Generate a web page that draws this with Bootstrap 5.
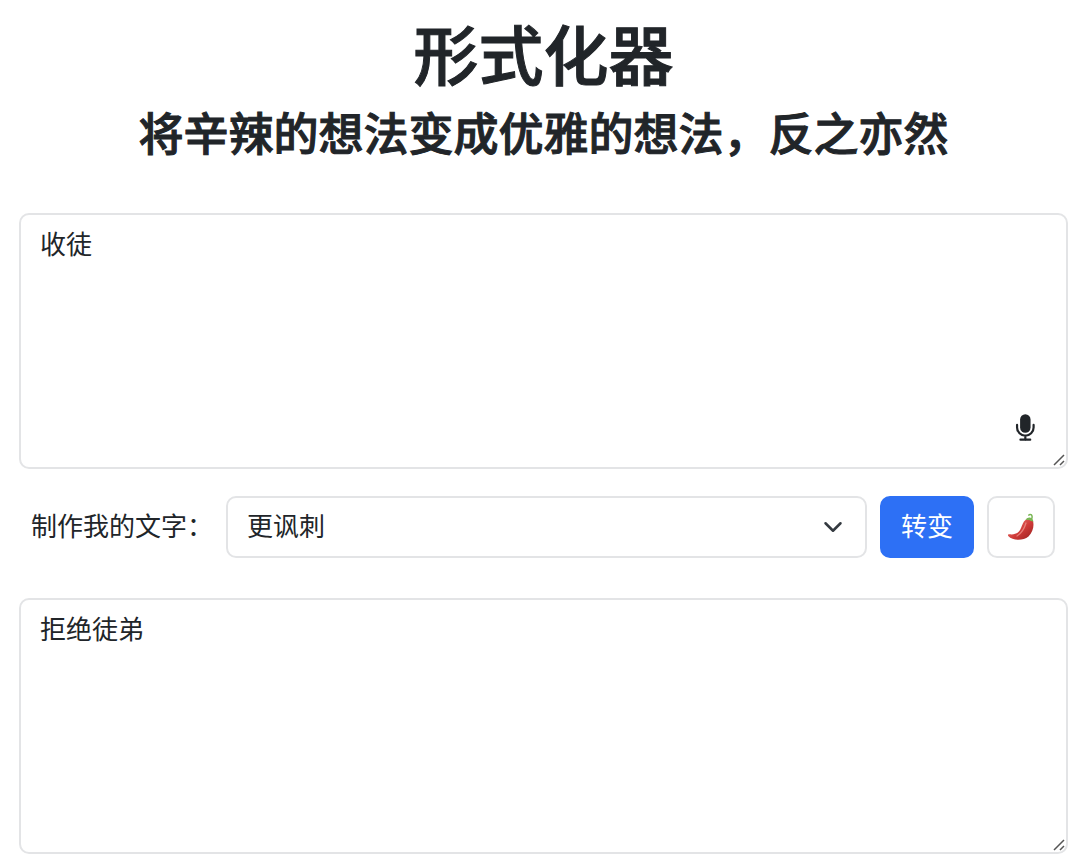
<!DOCTYPE html>
<html lang="zh-CN">
<head>
<meta charset="utf-8">
<meta name="viewport" content="width=device-width, initial-scale=1">
<title>形式化器</title>
<link href="https://cdn.jsdelivr.net/npm/bootstrap@5.3.0/dist/css/bootstrap.min.css" rel="stylesheet">
<style>
body{font-family:"Liberation Sans","Noto Sans CJK SC",sans-serif;font-size:26px;line-height:39px;color:#212529}
.page{padding:19px 12px 4px 19px}
.page-title,.page-subtitle{font-weight:500;-webkit-text-stroke:1px currentColor}
.page-title{font-size:65px;line-height:78px;margin-bottom:11px}
.page-subtitle{font-size:45px;line-height:56px;margin-bottom:49px}
.text-area.form-control{height:256px;padding:11px 19px;font-size:26px;line-height:39px;border:2px solid #e3e4e6;border-radius:10px;resize:vertical}
.text-area::-webkit-resizer{background:url("data:image/svg+xml,%3Csvg xmlns='http://www.w3.org/2000/svg' viewBox='0 0 15 15'%3E%3Cpath d='M3 13 13 3M9 13l4-4' stroke='%23555' stroke-width='1.500' fill='none'/%3E%3C/svg%3E") center/15px 15px no-repeat}
.mic{right:29px;bottom:28px;line-height:0;color:#212529}
.toolbar{padding:0 13px 0 12px;margin:27px 0 40px;gap:13px}
.tone.form-select{height:62px;font-size:26px;line-height:39px;padding:0 60px 0 19px;border:2px solid #e3e4e6;border-radius:10px;background-size:20px 20px;background-position:right 22px center}
.tool-btn{height:62px;font-size:26px;line-height:39px;border-radius:10px;padding:0 19px;border-width:2px}
.go{background:#2d70f5;border-color:#2d70f5}
.spice{width:68px;border-color:#e3e4e6;padding:0}
</style>
</head>
<body>
<main class="page">
<h1 class="page-title text-center">形式化器</h1>
<h2 class="page-subtitle text-center">将辛辣的想法变成优雅的想法，反之亦然</h2>
<div class="position-relative">
<textarea class="form-control text-area" aria-label="原文">收徒</textarea>
<button type="button" class="btn border-0 p-0 mic position-absolute" aria-label="语音输入">
<svg width="27" height="27" viewBox="0 0 16 16" fill="currentColor"><path d="M4.800 3.200a3.100 3.100 0 0 1 6.200 0v4.800a3.100 3.100 0 0 1-6.200 0z"/><path d="M3 6.500v1.500a4.900 4.900 0 0 0 9.800 0V6.500M7.900 12.800v2.500M5 15.200h5.800" fill="none" stroke="currentColor" stroke-width="1.300" stroke-linecap="round"/></svg>
</button>
</div>
<div class="toolbar d-flex align-items-center">
<label for="tone" class="text-nowrap">制作我的文字：</label>
<select id="tone" class="form-select tone flex-fill"><option>更讽刺</option></select>
<button type="button" class="btn btn-primary tool-btn go text-nowrap">转变</button>
<button type="button" class="btn tool-btn spice flex-shrink-0 d-flex align-items-center justify-content-center" aria-label="辣度">
<svg width="28" height="28" viewBox="0 0 28 28">
<defs><linearGradient id="skin" x1="0" y1="0" x2="1" y2="1"><stop offset="0.300" stop-color="#e0605a"/><stop offset="0.550" stop-color="#cf3a38"/><stop offset="1" stop-color="#97201f"/></linearGradient></defs>
<path d="M18.500 7C20.500 4.500 25 5 26 8 27.300 13 26 19 21.500 23.500 16 28 6 28 1.200 23 0.600 22 1.300 21 2.400 21.300 8 22 12 20 14 15 15.500 11.500 16 9 18.500 7z" fill="url(#skin)"/>
<path d="M19 10C17.500 15 15 20 10 23" fill="none" stroke="#f19a92" stroke-width="1.300" stroke-linecap="round" opacity="0.700"/>
<path d="M18.500 6.800C20 4.800 22 4.300 23.500 4.800 25.300 5.300 26.300 7 26.300 9 24.800 7.500 23.600 8.600 22.300 7 21 7.400 20 6.500 18.500 6.800z" fill="#79b655"/>
<path d="M24.300 6.500C25.700 4.300 25.300 1.400 23.300 1.400 22.200 1.400 21.800 2.200 21.800 2.200" fill="none" stroke="#79b655" stroke-width="1.500" stroke-linecap="round"/>
</svg>
</button>
</div>
<textarea class="form-control text-area" aria-label="结果" readonly>拒绝徒弟</textarea>
</main>
<script src="https://cdn.jsdelivr.net/npm/bootstrap@5.3.0/dist/js/bootstrap.bundle.min.js"></script>
</body>
</html>
